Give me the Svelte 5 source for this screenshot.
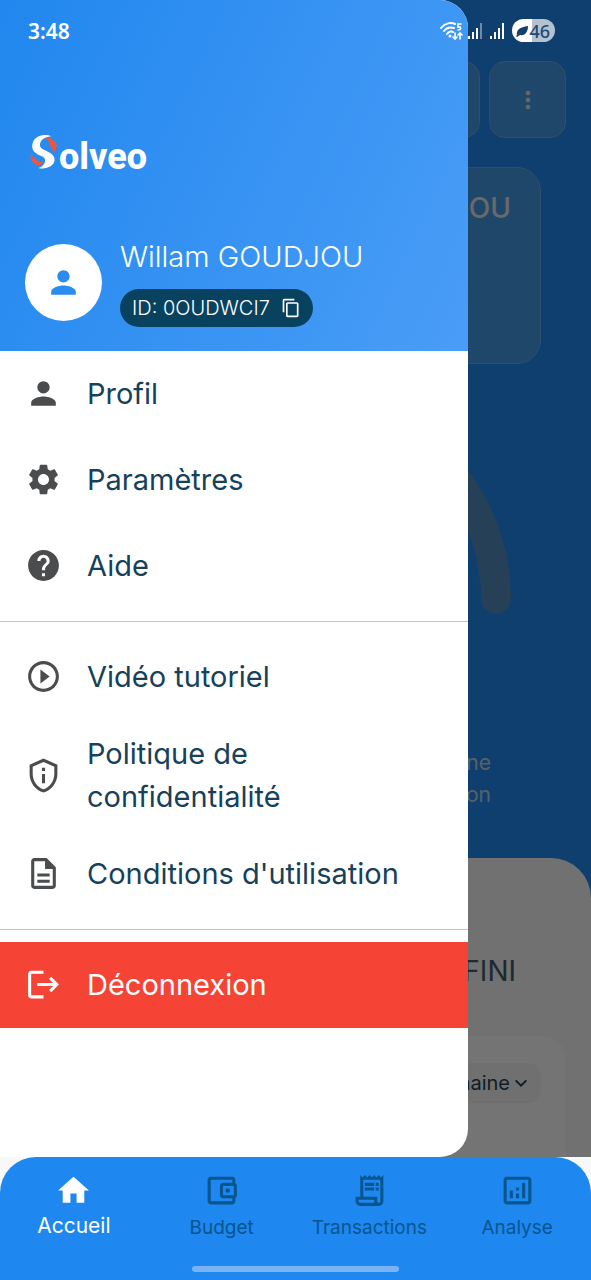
<script>
    const person =
        'M12 12c2.21 0 4-1.79 4-4s-1.79-4-4-4-4 1.79-4 4 1.79 4 4 4zm0 2c-2.67 0-8 1.34-8 4v2h16v-2c0-2.66-5.33-4-8-4z';
    const copy =
        'M16 1H4c-1.1 0-2 .9-2 2v14h2V3h12V1zm3 4H8c-1.1 0-2 .9-2 2v14c0 1.1.9 2 2 2h11c1.1 0 2-.9 2-2V7c0-1.1-.9-2-2-2zm0 16H8V7h11v14z';
    const logout =
        'M17 7l-1.41 1.41L18.17 11H8v2h10.17l-2.58 2.58L17 17l5-5zM4 5h8V3H4c-1.1 0-2 .9-2 2v14c0 1.1.9 2 2 2h8v-2H4V5z';

    const groups = [
        [
            { label: 'Profil', href: '#profil', icon: person },
            {
                label: 'Paramètres',
                href: '#parametres',
                icon: 'M19.14 12.94c.04-.3.06-.61.06-.94 0-.32-.02-.64-.07-.94l2.03-1.58c.18-.14.23-.41.12-.61l-1.92-3.32c-.12-.22-.37-.29-.59-.22l-2.39.96c-.5-.38-1.03-.7-1.62-.94l-.36-2.54c-.04-.24-.24-.41-.48-.41h-3.84c-.24 0-.43.17-.47.41l-.36 2.54c-.59.24-1.13.57-1.62.94l-2.39-.96c-.22-.08-.47 0-.59.22L2.74 8.87c-.12.21-.08.47.12.61l2.03 1.58c-.05.3-.09.63-.09.94s.02.64.07.94l-2.03 1.58c-.18.14-.23.41-.12.61l1.92 3.32c.12.22.37.29.59.22l2.39-.96c.5.38 1.03.7 1.62.94l.36 2.54c.05.24.24.41.48.41h3.84c.24 0 .44-.17.47-.41l.36-2.54c.59-.24 1.13-.56 1.62-.94l2.39.96c.22.08.47 0 .59-.22l1.92-3.32c.12-.22.07-.47-.12-.61l-2.01-1.58zM12 15.6c-1.98 0-3.6-1.62-3.6-3.6s1.62-3.6 3.6-3.6 3.6 1.62 3.6 3.6-1.62 3.6-3.6 3.6z'
            },
            {
                label: 'Aide',
                href: '#aide',
                icon: 'M12 2C6.48 2 2 6.48 2 12s4.48 10 10 10 10-4.48 10-10S17.52 2 12 2zm1 17h-2v-2h2v2zm2.07-7.75l-.9.92C13.45 12.9 13 13.5 13 15h-2v-.5c0-1.1.45-2.1 1.17-2.83l1.24-1.26c.37-.36.59-.86.59-1.41 0-1.1-.9-2-2-2s-2 .9-2 2H8c0-2.21 1.79-4 4-4s4 1.79 4 4c0 .88-.36 1.68-.93 2.25z'
            }
        ],
        [
            {
                label: 'Vidéo tutoriel',
                href: '#video',
                icon: 'M10 16.5l6-4.5-6-4.5v9zM12 2C6.48 2 2 6.48 2 12s4.48 10 10 10 10-4.48 10-10S17.52 2 12 2zm0 18c-4.41 0-8-3.59-8-8s3.59-8 8-8 8 3.59 8 8-3.59 8-8 8z'
            },
            {
                label: 'Politique de confidentialité',
                href: '#confidentialite',
                icon: 'M12 1L3 5v6c0 5.55 3.84 10.74 9 12 5.16-1.26 9-6.45 9-12V5l-9-4zM12 3.19l7 3.11V11c0 4.52-2.98 8.69-7 9.93-4.02-1.24-7-5.41-7-9.93V6.3l7-3.11zM11 7h2v2h-2zM11 11h2v6h-2z'
            },
            {
                label: "Conditions d'utilisation",
                href: '#conditions',
                icon: 'M8 16h8v2H8zm0-4h8v2H8zm6-10H6c-1.1 0-2 .9-2 2v16c0 1.1.89 2 1.99 2H18c1.1 0 2-.9 2-2V8l-6-6zm4 18H6V4h7v5h5v11z'
            }
        ]
    ];

    const tabs = [
        { label: 'Accueil', icon: 'M10 20v-6h4v6h5v-8h3L12 3 2 12h3v8z' },
        {
            label: 'Budget',
            icon: 'M21 7.28V5c0-1.1-.9-2-2-2H5c-1.11 0-2 .9-2 2v14c0 1.1.89 2 2 2h14c1.1 0 2-.9 2-2v-2.28c.59-.35 1-.98 1-1.72V9c0-.74-.41-1.37-1-1.72zM20 9v6h-7V9h7zM5 19V5h14v2h-6c-1.1 0-2 .9-2 2v6c0 1.1.9 2 2 2h6v2H5zM16 10.5a1.5 1.5 0 1 0 0 3 1.5 1.5 0 1 0 0-3z'
        },
        {
            label: 'Transactions',
            icon: 'M19.5 3.5L18 2l-1.5 1.5L15 2l-1.5 1.5L12 2l-1.5 1.5L9 2 7.5 3.5 6 2v14H3v3c0 1.66 1.34 3 3 3h12c1.66 0 3-1.34 3-3V2l-1.5 1.5zM15 20H6c-.55 0-1-.45-1-1v-1h10v2zm4-1c0 .55-.45 1-1 1s-1-.45-1-1v-3H8V5h11v14zM9 7h6v2H9zM16 7h2v2h-2zM9 10h6v2H9zM16 10h2v2h-2z'
        },
        {
            label: 'Analyse',
            icon: 'M19 3H5c-1.1 0-2 .9-2 2v14c0 1.1.9 2 2 2h14c1.1 0 2-.9 2-2V5c0-1.1-.9-2-2-2zm0 16H5V5h14v14zM7 12h2v5H7zM15 7h2v10h-2zM11 14h2v3h-2zM11 10h2v2h-2z'
        }
    ];

    let active = $state('Accueil');
</script>

{#snippet icon(path)}
    <svg class="icon" viewBox="0 0 24 24" aria-hidden="true">
        <path d={path} fill="currentColor" fill-rule="evenodd" />
    </svg>
{/snippet}

<div class="app">
    <div class="stage">
        <main class="page" inert>
            <div class="toolbar">
                <button class="tool" aria-label="Notifications"></button>
                <button class="tool" aria-label="Plus">
                    <svg class="icon" viewBox="0 0 24 24">
                        <g fill="currentColor">
                            <circle cx="12" cy="6" r="2" />
                            <circle cx="12" cy="12" r="2" />
                            <circle cx="12" cy="18" r="2" />
                        </g>
                    </svg>
                </button>
            </div>
            <section class="user-card">GOUDJOU</section>
            <svg class="gauge" viewBox="0 0 430 230" aria-hidden="true">
                <path d="M15 215A200 200 0 0 1 415 215" fill="none" stroke="currentColor" stroke-width="30" stroke-linecap="round" />
            </svg>
            <p class="hint">Ajoutez une<br />transaction</p>
            <section class="sheet">
                <h2>NON DÉFINI</h2>
                <div class="chart-card">
                    <button class="period">
                        Semaine
                        <svg class="chevron" viewBox="0 0 12 12" aria-hidden="true">
                            <path d="M2 4l4 4 4-4" fill="none" stroke="currentColor" stroke-width="1.5" />
                        </svg>
                    </button>
                </div>
            </section>
        </main>

        <div class="scrim"></div>

        <aside class="drawer">
            <header class="head">
                <div class="logo">
                    <svg class="mark" viewBox="0 0 90 110" role="img" aria-label="Solveo">
                        <path fill="#e8573f" d="M44 16C60 8 76 18 82 32C84 44 80 54 74 60C70 48 60 36 60 28C58 22 52 18 44 16Z" />
                        <path fill="#e8573f" d="M2 62C0 76 6 94 26 98C34 98 38 94 40 88C26 88 12 76 2 62Z" />
                        <path fill="#fff" d="M66 8C50 0 20 4 10 24C2 44 10 56 24 64C40 70 50 74 46 88C42 98 36 104 26 106C50 112 74 100 76 84C78 66 64 60 48 52C34 46 28 40 32 28C36 16 50 10 66 8Z" />
                    </svg>
                    <span>olveo</span>
                </div>
                <div class="identity">
                    <div class="avatar">{@render icon(person)}</div>
                    <div class="who">
                        <div class="name">Willam GOUDJOU</div>
                        <button class="user-id">ID: 0OUDWCI7 {@render icon(copy)}</button>
                    </div>
                </div>
            </header>
            <nav>
                {#each groups as group}
                    {#each group as item}
                        <a class="item" href={item.href}>
                            {@render icon(item.icon)}
                            <span>{item.label}</span>
                        </a>
                    {/each}
                    <hr />
                {/each}
                <button class="item logout">
                    {@render icon(logout)}
                    <span>Déconnexion</span>
                </button>
            </nav>
        </aside>

        <div class="status">
            <span class="time">3:48</span>
            <svg class="wifi" viewBox="0 0 24 20" aria-hidden="true">
                <g fill="none" stroke="#fff" stroke-width="2" stroke-linecap="round">
                    <path d="M1 7C5 2 11 1 15 3M4 10C7 6 11 6 14 7M7 13C9 10 12 10 13 11" />
                    <path stroke-width="1.6" d="M21 3h-3v3c3-1 4 3 0 3M15 12v6m-2-2l2 2 2-2M20 18v-6m-2 2l2-2 2 2" />
                </g>
                <circle cx="10" cy="15" r="1.5" fill="#fff" />
            </svg>
            <svg class="signal" viewBox="0 0 16 16" aria-hidden="true">
                <path fill="#fff" d="M0 13h2v3H0zM4 9h2v7H4zM8 5h2v11H8z" />
                <path fill="#fff" opacity=".4" d="M12 0h2v16h-2z" />
            </svg>
            <svg class="signal" viewBox="0 0 16 16" aria-hidden="true">
                <path fill="#fff" d="M0 13h2v3H0zM4 9h2v7H4zM8 5h2v11H8zM12 0h2v16h-2z" />
            </svg>
            <span class="battery">
                <svg viewBox="0 0 12 12" aria-hidden="true">
                    <path fill="#123f6b" d="M1 10C0 5 4 2 12 1C12 7 9 11 4 10L1 12L0 11L7 5Z" />
                </svg>
                46
            </span>
        </div>
    </div>

    <nav class="tabs">
        <div class="tab-row">
            {#each tabs as tab}
                <button class="tab" class:active={active === tab.label} onclick={() => (active = tab.label)}>
                    {@render icon(tab.icon)}
                    <span>{tab.label}</span>
                </button>
            {/each}
        </div>
        <div class="home-bar"></div>
    </nav>
</div>

<style>
    :global(body) {
        margin: 0;
        background: #f8f8f8;
    }
    .app {
        display: flex;
        flex-direction: column;
        min-height: 100vh;
        font-family: Inter, 'Noto Sans', sans-serif;
    }
    button {
        font: inherit;
        border: none;
        cursor: pointer;
    }
    .icon {
        display: block;
        flex: none;
        width: 37px;
        height: 37px;
    }
    .stage {
        position: relative;
        flex: 1;
        display: flex;
        overflow: hidden;
    }

    /* Home page under the drawer */
    .page {
        flex: 1;
        display: flex;
        flex-direction: column;
        background: #2089f0;
        color: #fff;
    }
    .toolbar {
        display: flex;
        justify-content: flex-end;
        gap: 9px;
        padding: 61px 25px 29px;
    }
    .tool {
        display: grid;
        place-items: center;
        box-sizing: border-box;
        width: 77px;
        height: 77px;
        border: 1px solid #6aaae4;
        border-radius: 16px;
        background: #449be8;
        color: #dde4ea;
    }
    .tool .icon {
        width: 28px;
        height: 28px;
    }
    .user-card {
        box-sizing: border-box;
        height: 197px;
        margin: 0 50px;
        padding: 20px 29px;
        border: 1px solid #6aaae4;
        border-radius: 24px;
        background: #449be8;
        color: #e4e4e4;
        font-size: 28px;
        font-weight: 500;
        line-height: 40px;
        text-align: right;
    }
    .gauge {
        align-self: center;
        width: 430px;
        margin-top: 20px;
        color: #538bc0;
    }
    .hint {
        margin: 133px 100px 47px;
        color: #bfd3e6;
        font-size: 21px;
        line-height: 32px;
        text-align: right;
    }
    .sheet {
        flex: 1;
        display: flex;
        flex-direction: column;
        border-radius: 40px 40px 0 0;
        background: #f6f6f6;
        color: #3f5c6b;
    }
    .sheet h2 {
        margin: 93px 75px 45px;
        font-size: 28px;
        font-weight: 400;
        line-height: 40px;
        text-align: right;
    }
    .chart-card {
        flex: 1;
        display: flex;
        justify-content: flex-end;
        align-items: flex-start;
        margin: 0 25px;
        padding: 27px 25px;
        border-radius: 24px 24px 0 0;
        background: #fdfdfd;
    }
    .period {
        display: flex;
        align-items: center;
        gap: 3px;
        height: 40px;
        padding: 0 12px;
        border-radius: 12px;
        background: #f5f5f5;
        color: #1f4252;
        font-size: 20px;
    }
    .chevron {
        width: 16px;
        height: 16px;
    }
    .scrim {
        position: absolute;
        inset: 0;
        background: rgba(0, 0, 0, 0.54);
    }

    /* Drawer */
    .drawer {
        position: absolute;
        top: 0;
        bottom: 0;
        left: 0;
        width: 79.2%;
        overflow: hidden;
        border-radius: 0 28px 28px 0;
        background: #fff;
    }
    .head {
        display: flex;
        flex-direction: column;
        box-sizing: border-box;
        height: 351px;
        padding: 133px 25px 24px;
        background: linear-gradient(115deg, #2187ee, #4a9df7);
        color: #fff;
    }
    .logo {
        display: flex;
        align-items: flex-end;
        height: 44px;
        padding-left: 5px;
        font-family: Roboto, sans-serif;
        font-size: 36px;
        font-weight: 800;
        line-height: 40px;
    }
    .mark {
        width: 29px;
        height: 37px;
        align-self: flex-start;
    }
    .identity {
        display: flex;
        align-items: center;
        gap: 18px;
        margin-top: auto;
    }
    .avatar {
        display: grid;
        place-items: center;
        width: 77px;
        height: 77px;
        border-radius: 50%;
        background: #fff;
        color: #2b8bf0;
    }
    .name {
        margin-bottom: 12px;
        font-size: 29px;
        font-weight: 300;
        line-height: 40px;
    }
    .user-id {
        display: flex;
        align-items: center;
        gap: 11px;
        height: 38px;
        padding: 0 12px;
        border-radius: 19px;
        background: #08425f;
        color: #fff;
        font-size: 20px;
        font-weight: 300;
    }
    .user-id .icon {
        width: 20px;
        height: 20px;
    }
    .item {
        display: flex;
        align-items: center;
        gap: 25px;
        box-sizing: border-box;
        width: 100%;
        min-height: 86px;
        padding: 12px 40px 13px 25px;
        color: #4a4c4e;
        font-size: 29px;
        line-height: 43px;
        text-align: left;
        text-decoration: none;
    }
    .item span {
        color: #17415a;
    }
    .item.logout,
    .item.logout span {
        background: #f54336;
        color: #fff;
    }
    hr {
        height: 1px;
        margin: 12px 0;
        border: none;
        background: #c4c4c4;
    }

    /* System status bar */
    .status {
        position: absolute;
        inset: 0 0 auto 0;
        display: flex;
        align-items: center;
        height: 61px;
        padding: 0 36px 0 28px;
        color: #fff;
    }
    .time {
        margin-right: auto;
        font-family: 'Noto Sans', sans-serif;
        font-size: 21px;
        font-weight: 600;
    }
    .wifi {
        width: 24px;
        height: 20px;
        margin-right: 4px;
    }
    .signal {
        width: 16px;
        height: 16px;
        margin-right: 6px;
    }
    .battery {
        display: flex;
        align-items: center;
        gap: 1px;
        height: 23px;
        padding: 0 5px 0 4px;
        border-radius: 12px;
        background: linear-gradient(90deg, #fff 46%, #b4c1ce 46%);
        color: #1f4a75;
        font-family: 'Noto Sans', sans-serif;
        font-size: 18px;
        font-weight: 500;
    }
    .battery svg {
        width: 12px;
        height: 12px;
    }

    /* Bottom tabs */
    .tabs {
        display: flex;
        flex-direction: column;
        align-items: center;
        justify-content: space-between;
        box-sizing: border-box;
        height: 123px;
        padding: 15px 0 8px;
        border-radius: 36px 36px 0 0;
        background: #1e87f0;
    }
    .tab-row {
        display: flex;
        width: 100%;
    }
    .tab {
        flex: 1;
        display: flex;
        flex-direction: column;
        align-items: center;
        gap: 6px;
        padding: 0;
        background: none;
        color: #08568f;
        font-size: 19px;
        line-height: 26px;
    }
    .tab.active {
        gap: 4px;
        color: #fff;
        font-size: 21px;
    }
    .home-bar {
        width: 35%;
        height: 6px;
        border-radius: 3px;
        background: #78b4f5;
    }
</style>
